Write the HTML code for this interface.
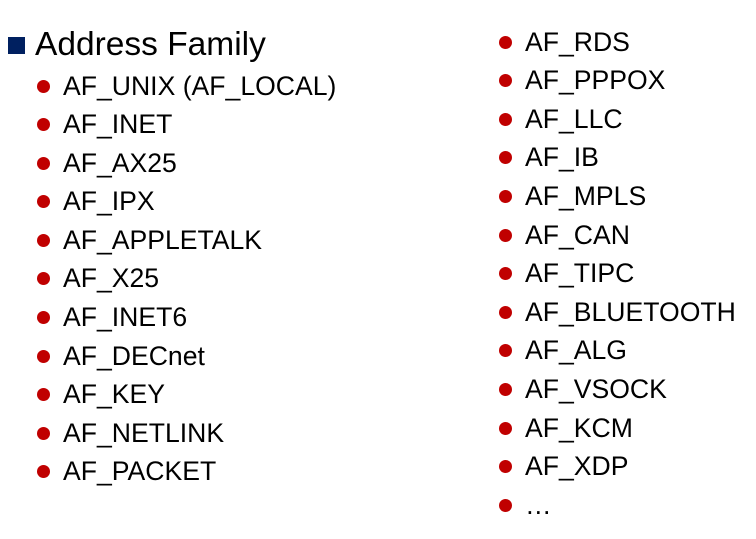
<!DOCTYPE html>
<html><head><style>
body{margin:0;width:756px;height:539px;background:#fff;position:relative;overflow:hidden;font-family:"Liberation Sans",sans-serif;color:#000}
.t{position:absolute;left:35px;top:25px;font-size:33.5px;line-height:40px}
.sq{position:absolute;left:8px;top:37px;width:17px;height:17px;background:#002060}
ul{list-style:none;margin:0;padding:0;position:absolute}
li{height:38.6px;line-height:38.6px;font-size:26.6px;position:relative;white-space:nowrap}
li:before{content:"";position:absolute;left:-26px;top:13px;width:13px;height:13px;border-radius:50%;background:#c00000}
#l{left:63px;top:66.5px}
#r{left:525px;top:22.7px}
</style></head><body>
<div class="sq"></div><div class="t">Address Family</div>
<ul id="l"><li>AF_UNIX (AF_LOCAL)</li><li>AF_INET</li><li>AF_AX25</li><li>AF_IPX</li><li>AF_APPLETALK</li><li>AF_X25</li><li>AF_INET6</li><li>AF_DECnet</li><li>AF_KEY</li><li>AF_NETLINK</li><li>AF_PACKET</li></ul>
<ul id="r"><li>AF_RDS</li><li>AF_PPPOX</li><li>AF_LLC</li><li>AF_IB</li><li>AF_MPLS</li><li>AF_CAN</li><li>AF_TIPC</li><li>AF_BLUETOOTH</li><li>AF_ALG</li><li>AF_VSOCK</li><li>AF_KCM</li><li>AF_XDP</li><li>…</li></ul>
</body></html>
